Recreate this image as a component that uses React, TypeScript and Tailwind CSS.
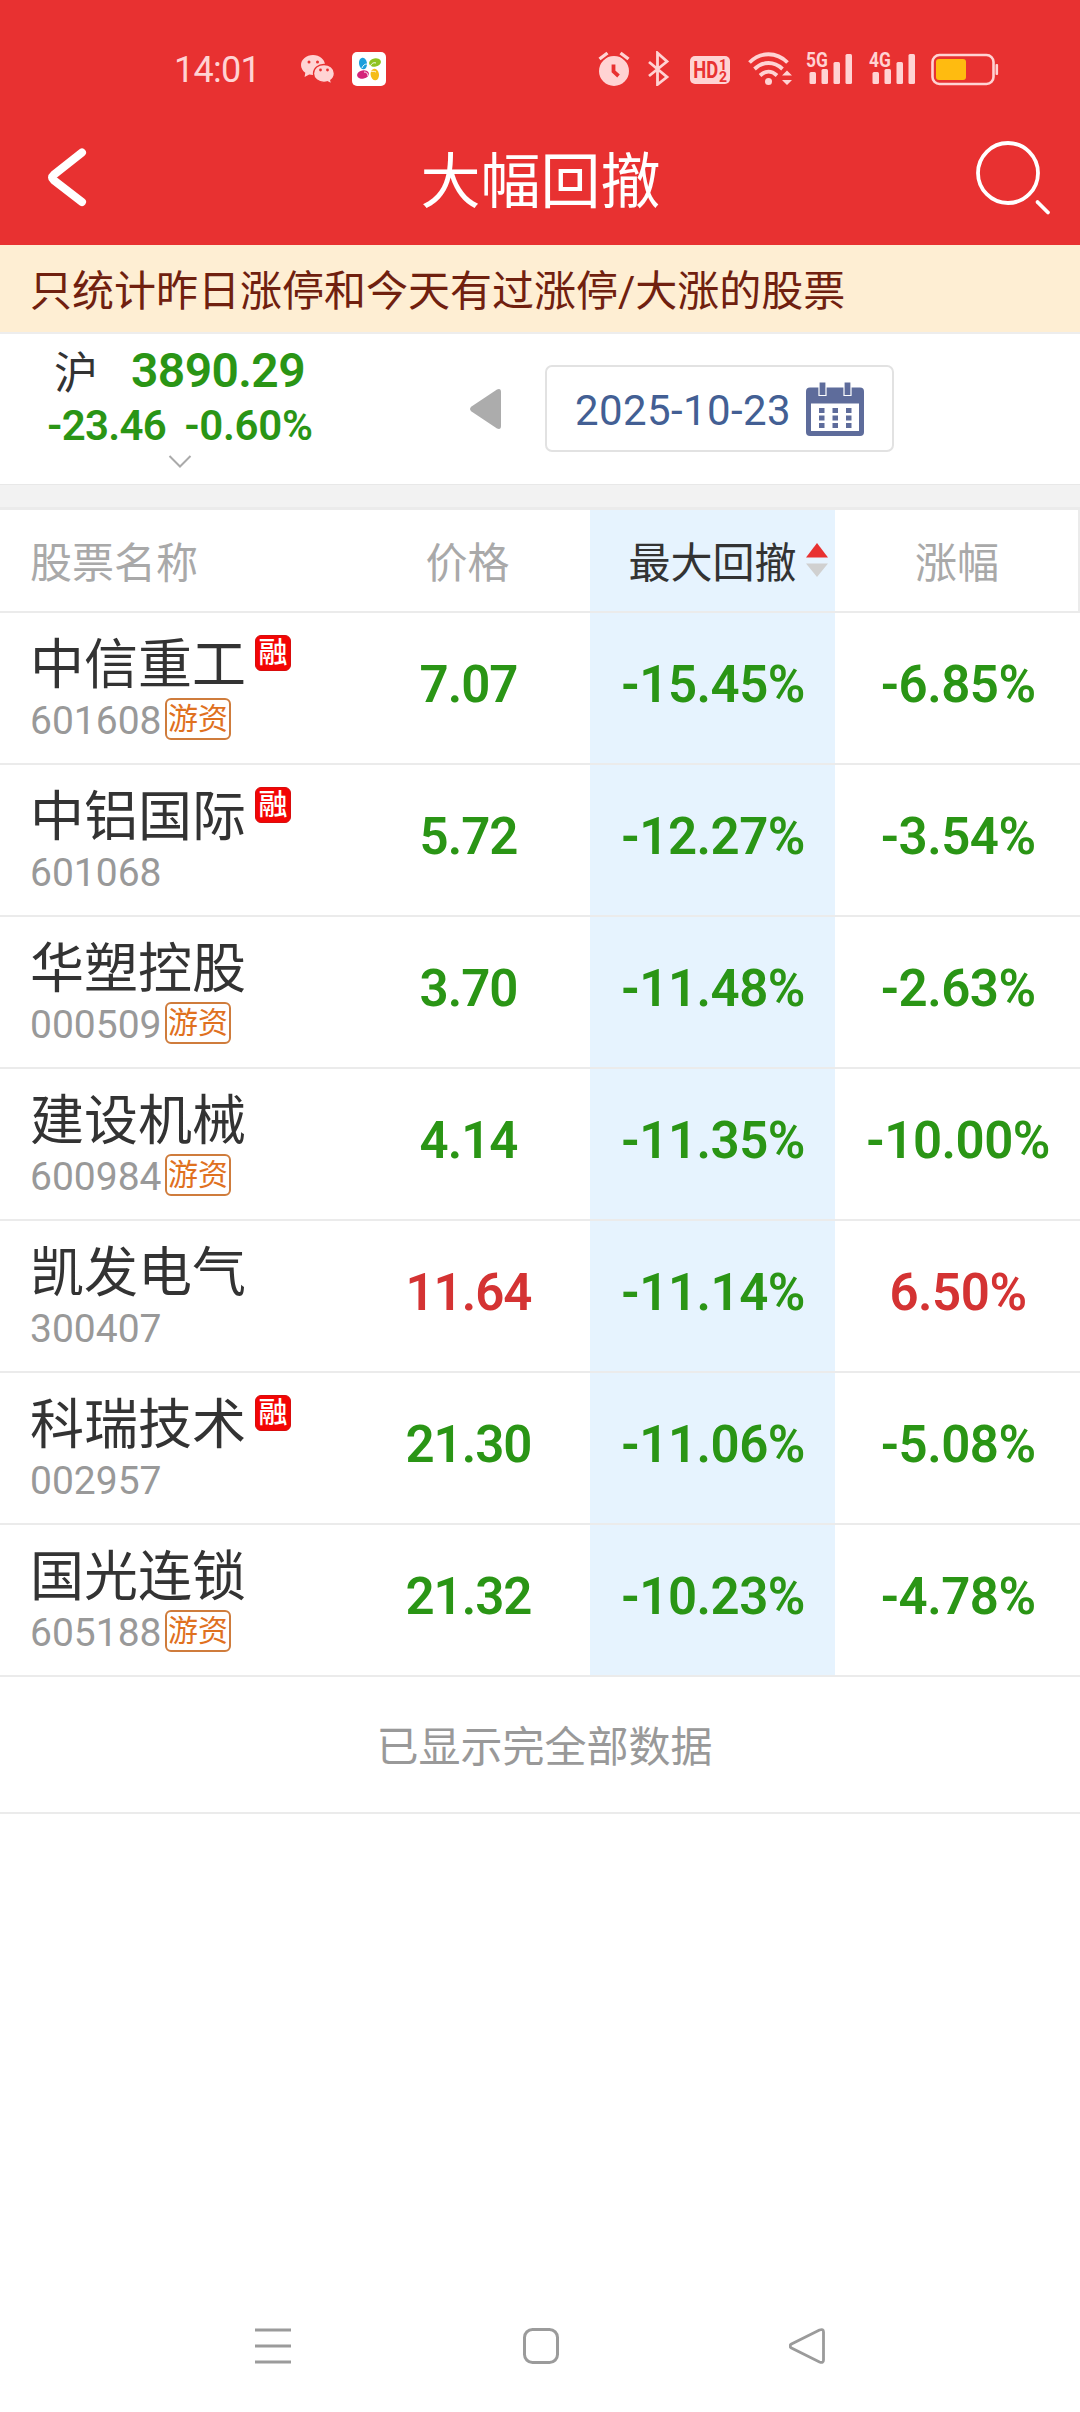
import React from 'react';
import clsx from 'clsx';

interface IAcao {
  nome: string;
  codigo: string;
  preco: string;
  recuo: string;
  variacao: string;
  financiado?: boolean;
  capital?: boolean;
  alta?: boolean;
}

const acoes: IAcao[] = [
  { nome: '中信重工', codigo: '601608', preco: '7.07', recuo: '-15.45%', variacao: '-6.85%', financiado: true, capital: true },
  { nome: '中铝国际', codigo: '601068', preco: '5.72', recuo: '-12.27%', variacao: '-3.54%', financiado: true },
  { nome: '华塑控股', codigo: '000509', preco: '3.70', recuo: '-11.48%', variacao: '-2.63%', capital: true },
  { nome: '建设机械', codigo: '600984', preco: '4.14', recuo: '-11.35%', variacao: '-10.00%', capital: true },
  { nome: '凯发电气', codigo: '300407', preco: '11.64', recuo: '-11.14%', variacao: '6.50%', alta: true },
  { nome: '科瑞技术', codigo: '002957', preco: '21.30', recuo: '-11.06%', variacao: '-5.08%', financiado: true },
  { nome: '国光连锁', codigo: '605188', preco: '21.32', recuo: '-10.23%', variacao: '-4.78%', capital: true },
];

const Signal = ({ label }: { label: string }) => (
  <svg width="48" height="36" viewBox="0 0 48 36" className="shrink-0 overflow-visible" fill="#ffd3d3">
    <text x="0" y="16" fontSize="20" fontWeight="700" transform="scale(0.87 1)">{label}</text>
    <rect x="3.5" y="21" width="6.5" height="12" rx="1.5" />
    <rect x="15.5" y="18" width="6.5" height="15" rx="1.5" />
    <rect x="27.5" y="11" width="6.5" height="22" rx="1.5" />
    <rect x="39.5" y="3" width="6.5" height="30" rx="1.5" />
  </svg>
);

const StatusBar = () => (
  <div className="flex h-[103px] items-start pl-[174px] pt-[51px]">
    <span className="w-[127px] pt-px text-[36px] leading-[37px] tracking-[-0.700px] text-[#ffd3d3]">14:01</span>
    <svg width="34" height="36" viewBox="0 0 34 36" className="shrink-0">
      <path d="M12 4C5.400 4 0 8.500 0 14c0 3.200 1.600 5.800 4.300 7.700L3.600 26l4.600-2.500c1.200.3 2.500.5 3.800.5 6.600 0 12-4.500 12-10S18.600 4 12 4Z" fill="#ffd3d3" />
      <path d="M23 13.500c-5.800 0-10.500 3.900-10.500 9S17.200 31.300 23 31.300c1.200 0 2.400-.2 3.400-.5l4.300 2.200-.9-3.700c2.300-1.600 3.600-4 3.600-6.800 0-5.100-4.600-9-10.400-9Z" fill="#ffd3d3" stroke="#e83131" strokeWidth="1.300" />
      <g fill="#e83131">
        <circle cx="8" cy="11" r="1.500" />
        <circle cx="16.500" cy="11" r="1.500" />
        <circle cx="19.500" cy="19" r="1.400" />
        <circle cx="26.500" cy="19" r="1.400" />
      </g>
    </svg>
    <svg width="34" height="34" viewBox="0 0 34 34" className="ml-[17px] mt-px shrink-0">
      <rect width="34" height="34" rx="5" fill="#fff" />
      <ellipse cx="11" cy="11.500" rx="4" ry="5.800" fill="#1d9fdc" transform="rotate(-8 11 11.500)" />
      <ellipse cx="23" cy="10.500" rx="6" ry="4.200" fill="#8fc31f" transform="rotate(-12 23 10.500)" />
      <ellipse cx="11" cy="22.500" rx="6" ry="4.200" fill="#d4237a" transform="rotate(-12 11 22.500)" />
      <ellipse cx="22.800" cy="22.500" rx="4.200" ry="5.800" fill="#f5bd19" transform="rotate(-8 22.800 22.500)" />
      <path d="M10 16c1-3 3-4 5-4M18 15c1-3 3-5 6-4M12 20c2 0 4 1 4 4M18 20c2-1 4-1 6 0" stroke="#fff" strokeWidth="0.900" fill="none" />
    </svg>
    <svg width="32" height="35" viewBox="0 0 32 35" className="ml-[212px] shrink-0">
      <circle cx="16" cy="20" r="15" fill="#ffd3d3" />
      <path d="M1.500 8.500l8-6.500M30.500 8.500l-8-6.500" stroke="#e83131" strokeWidth="6" />
      <path d="M1.500 8l8-6M30.500 8l-8-6" stroke="#ffd3d3" strokeWidth="3.400" />
      <path d="M15.500 13.500v7l5 4.500" stroke="#e83131" strokeWidth="3.800" fill="none" />
    </svg>
    <svg width="22" height="35" viewBox="0 0 22 35" className="ml-[18px] shrink-0" fill="none" stroke="#ffd3d3" strokeWidth="2.800">
      <path d="M1 11 19 26l-9.500 7.500V2L19 10.500 1 25" />
    </svg>
    <svg width="40" height="35" viewBox="0 0 40 35" className="ml-[20px] shrink-0">
      <rect y="5" width="40" height="28" rx="5" fill="#ffd3d3" />
      <g fill="#e83131" fontWeight="700">
        <text x="4" y="27" fontSize="23" transform="scale(0.8 1)">HD</text>
        <text x="29" y="18.500" fontSize="14">1</text>
        <text x="29" y="30.500" fontSize="14">2</text>
      </g>
    </svg>
    <svg width="45" height="36" viewBox="0 0 45 36" className="ml-[18px] shrink-0">
      <g fill="none" stroke="#ffd3d3" strokeWidth="3.800">
        <path d="M1.500 11.500c11-11 27-11 38 0M6.500 18c8.500-8 19.500-8 28 0M12 24.500c5.500-5 11.500-5 17 0" />
      </g>
      <g fill="#ffd3d3">
        <circle cx="20.500" cy="30.500" r="3.500" />
        <path d="M39 19.500l5 5H34zM39 34l5-5H34z" />
      </g>
    </svg>
    <div className="ml-[13px] flex gap-[15px]">
      <Signal label="5G" />
      <Signal label="4G" />
    </div>
    <svg width="68" height="36" viewBox="0 0 68 36" className="ml-[14px] shrink-0">
      <rect x="1.500" y="4" width="61" height="29" rx="7" fill="none" stroke="#ffd3d3" strokeWidth="2.600" />
      <rect x="5" y="8" width="30" height="21" rx="3" fill="#ffbb10" />
      <rect x="64.500" y="13" width="2.600" height="11" rx="1" fill="#ffd3d3" />
    </svg>
  </div>
);

const Header = () => (
  <header className="h-[245px] bg-[#e83131]">
    <StatusBar />
    <div className="flex h-[142px] items-start justify-between pl-[46px] pr-[29px]">
      <svg width="61" height="66" viewBox="0 0 61 66" className="mt-[41px]" fill="none" stroke="#fff" strokeWidth="8" strokeLinecap="round" strokeLinejoin="round">
        <path d="M36 8.500 7.500 31q-3 2.500 0 5L36 58" />
      </svg>
      <h1 className="mt-[35px] text-[60px] leading-[90px] text-white">大幅回撤</h1>
      <svg width="77" height="80" viewBox="0 0 77 80" className="mt-[37px]" fill="none" stroke="#fff" strokeWidth="3.800" strokeLinecap="round">
        <circle cx="34" cy="33" r="30" />
        <path d="M63.500 62l10.500 10.500" />
      </svg>
    </div>
  </header>
);

const CalendarIcon = () => (
  <svg width="58" height="54" viewBox="0 0 58 54">
    <rect y="5.500" width="58" height="48.500" rx="4" fill="#5e6c9b" />
    <rect x="5" y="21.500" width="48" height="27.500" fill="#fff" />
    <path d="M13 0h7v13.500h-7zM38 0h7v13.500h-7z" fill="#5e6c9b" stroke="#fff" strokeWidth="1.200" />
    <path d="M13 26h5.500v5H13zM26.500 26H32v5h-5.500zM40 26h5.500v5H40zM13 33.500h5.500v5H13zM26.500 33.500H32v5h-5.500zM40 33.500h5.500v5H40zM13 41h5.500v5H13zM26.500 41H32v5h-5.500zM40 41h5.500v5H40z" fill="#5e6c9b" />
  </svg>
);

const IndexPanel = () => (
  <section className="flex h-[150px] items-start">
    <div className="flex w-[360px] flex-col">
      <div className="flex h-[70px] items-start pl-[54px] pt-[8px]">
        <span className="w-[77px] text-[44px] leading-[64px] text-[#333]">沪</span>
        <span className="text-[48px] leading-[57px] font-semibold tracking-[-0.600px] text-[#2a9515]">3890.29</span>
      </div>
      <div className="flex h-[50px] gap-[18px] pl-[47px] pt-[2px] text-[42px] leading-[40px] font-semibold tracking-[-0.700px] text-[#2a9515]">
        <span>-23.46</span>
        <span className="tracking-[-0.300px]">-0.60%</span>
      </div>
      <svg width="24" height="14" viewBox="0 0 24 14" className="ml-[168px]" fill="none" stroke="#aaa" strokeWidth="2">
        <path d="M1.500 2 12 12.500 22.500 2" />
      </svg>
    </div>
    <svg width="32" height="42" viewBox="0 0 32 42" className="ml-[110px] mt-[54px]">
      <path d="M31 4v34q0 4-4 2.500L1.500 23.500q-3-2.500 0-5L27 1.500Q31 0 31 4Z" fill="#acacac" />
    </svg>
    <div className="ml-[43px] mt-[31px] flex h-[87px] w-[349px] items-center rounded-[7px] border-2 border-[#e2e2e2] pl-[28px]">
      <span className="w-[231px] pt-[4px] text-[42px] leading-none tracking-[0.400px] text-[#435f94]">2025-10-23</span>
      <CalendarIcon />
    </div>
  </section>
);

const TableHead = () => (
  <div className="flex h-[103px] items-stretch border-r-2 border-b-2 border-[#ebebeb] text-[42px] leading-[107px] text-[#a9a9a9]">
    <div className="w-[345px] shrink-0 pl-[30px]">股票名称</div>
    <div className="w-[245px] shrink-0 text-center">价格</div>
    <div className="relative w-[245px] shrink-0 bg-[#e6f3fe] text-center text-[#333]">
      最大回撤
      <svg width="24" height="36" viewBox="0 0 24 36" className="absolute left-[215px] top-[32px]">
        <path d="M12 1l11 14.500H1z" fill="#e83131" />
        <path d="M12 35 23 21.500H1z" fill="#d0d0d0" />
      </svg>
    </div>
    <div className="w-[243px] shrink-0 pl-px text-center">涨幅</div>
  </div>
);

const Row = ({ acao }: { acao: IAcao }) => (
  <div className="flex h-[152px] border-b-2 border-[#ebebeb] text-[51px] leading-[144px] font-semibold tracking-[-0.500px] text-[#2a9515]">
    <div className="w-[345px] pl-[30px] pt-[11px] font-normal tracking-normal">
      <div className="flex h-[79px] items-start">
        <span className="text-[54px] leading-[84px] text-[#333]">{acao.nome}</span>
        {acao.financiado && (
          <span className="ml-[9px] mt-[11px] flex h-[36px] w-[36px] items-center justify-center rounded-[6px] border border-[#d80d0d] bg-[#f30505] text-[29px] leading-[34px] font-medium text-white">融</span>
        )}
      </div>
      <div className="flex items-start">
        <span className="w-[135px] text-[39px] leading-[37px] text-[#999]">{acao.codigo}</span>
        {acao.capital && (
          <span className="-mt-[5px] flex h-[42px] w-[66px] items-center justify-center rounded-[6px] border-2 border-[#cf7c3c] text-[30px] leading-[38px] text-[#e0711f]">游资</span>
        )}
      </div>
    </div>
    <div className={clsx('w-[245px] pl-[2px] text-center tracking-[-1px]', acao.alta && 'text-[#d43333]')}>{acao.preco}</div>
    <div className="w-[245px] bg-[#e6f3fe] pl-px text-center">{acao.recuo}</div>
    <div className={clsx('w-[245px] pl-px text-center', acao.alta && 'text-[#d43333]')}>{acao.variacao}</div>
  </div>
);

const NavBar = () => (
  <nav className="mt-auto flex h-[96px] items-start justify-between pl-[254px] pr-[253px] pt-[11px]">
    <svg width="38" height="38" viewBox="0 0 38 38" stroke="#9b9b9b" strokeWidth="3">
      <path d="M1 3h36M1 19h36M1 35h36" />
    </svg>
    <svg width="38" height="38" viewBox="0 0 38 38" fill="none" stroke="#9b9b9b" strokeWidth="3">
      <rect x="2.500" y="2.500" width="33" height="33" rx="8" />
    </svg>
    <svg width="38" height="38" viewBox="0 0 38 38" fill="none" stroke="#9b9b9b" strokeWidth="2.800">
      <path d="M34.500 5v28q0 3.500-4 2L2.500 21q-3-2 0-4L30.500 3q4-1.500 4 2Z" />
    </svg>
  </nav>
);

export const MaiorRecuo: React.FC = () => (
  <div className="flex h-[2412px] w-[1080px] flex-col overflow-hidden bg-white font-['Roboto','Noto_Sans_CJK_SC',sans-serif]">
    <Header />
    <div className="h-[89px] border-b-2 border-[#ededed] bg-[#feeed3] pl-[30px] text-[42px] leading-[94px] whitespace-nowrap text-[#70200f]">
      只统计昨日涨停和今天有过涨停/大涨的股票
    </div>
    <IndexPanel />
    <div className="h-[26px] border-t border-b-3 border-t-[#e8e8e8] border-b-[#ebebeb] bg-[#f2f2f2]" />
    <TableHead />
    {acoes.map((acao) => (
      <Row key={acao.codigo} acao={acao} />
    ))}
    <div className="h-[137px] border-b-2 border-[#ebebeb] pl-[9px] text-center text-[42px] leading-[142px] text-[#999]">
      已显示完全部数据
    </div>
    <NavBar />
  </div>
);

export default MaiorRecuo;
